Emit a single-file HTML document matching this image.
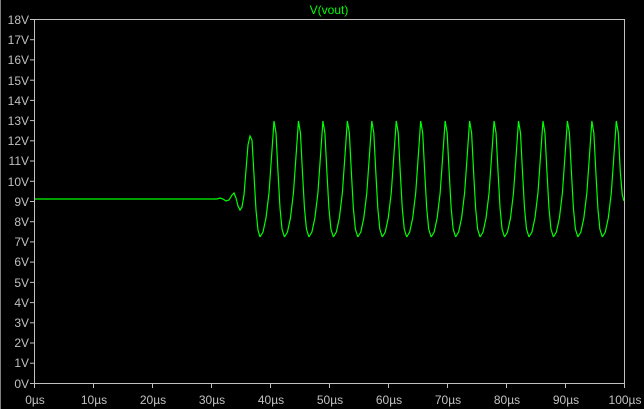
<!DOCTYPE html>
<html><head><style>
body{margin:0;background:#000;width:644px;height:409px;overflow:hidden}
svg{display:block}
text{font-family:"Liberation Sans",sans-serif;font-size:12px;fill:#c0c0c0}
</style></head><body>
<svg width="644" height="409" xmlns="http://www.w3.org/2000/svg">
<rect x="0" y="0" width="1" height="409" fill="#808080"/>
<rect x="34.5" y="19.5" width="590" height="364" fill="none" stroke="#c0c0c0" stroke-width="1"/>
<text x="329" y="14" text-anchor="middle" style="fill:#00ff00">V(vout)</text>
<g id="yl" stroke="#c0c0c0">
<line x1="30" x2="34" y1="19.5" y2="19.5"/><line x1="30" x2="34" y1="39.7" y2="39.7"/><line x1="30" x2="34" y1="59.9" y2="59.9"/><line x1="30" x2="34" y1="80.2" y2="80.2"/><line x1="30" x2="34" y1="100.4" y2="100.4"/><line x1="30" x2="34" y1="120.6" y2="120.6"/><line x1="30" x2="34" y1="140.8" y2="140.8"/><line x1="30" x2="34" y1="161" y2="161"/><line x1="30" x2="34" y1="181.3" y2="181.3"/><line x1="30" x2="34" y1="201.5" y2="201.5"/><line x1="30" x2="34" y1="221.7" y2="221.7"/><line x1="30" x2="34" y1="241.9" y2="241.9"/><line x1="30" x2="34" y1="262.1" y2="262.1"/><line x1="30" x2="34" y1="282.4" y2="282.4"/><line x1="30" x2="34" y1="302.6" y2="302.6"/><line x1="30" x2="34" y1="322.8" y2="322.8"/><line x1="30" x2="34" y1="343" y2="343"/><line x1="30" x2="34" y1="363.2" y2="363.2"/><line x1="30" x2="34" y1="383.5" y2="383.5"/>
</g>
<g text-anchor="end">
<text x="29" y="24">18V</text><text x="29" y="44">17V</text><text x="29" y="64">16V</text><text x="29" y="85">15V</text><text x="29" y="105">14V</text><text x="29" y="125">13V</text><text x="29" y="145">12V</text><text x="29" y="165">11V</text><text x="29" y="186">10V</text><text x="29" y="206">9V</text><text x="29" y="226">8V</text><text x="29" y="246">7V</text><text x="29" y="266">6V</text><text x="29" y="287">5V</text><text x="29" y="307">4V</text><text x="29" y="327">3V</text><text x="29" y="347">2V</text><text x="29" y="367">1V</text><text x="29" y="388">0V</text>
</g>
<g stroke="#c0c0c0">
<line x1="34.5" x2="34.5" y1="383" y2="388"/><line x1="93.5" x2="93.5" y1="383" y2="388"/><line x1="152.5" x2="152.5" y1="383" y2="388"/><line x1="211.5" x2="211.5" y1="383" y2="388"/><line x1="270.5" x2="270.5" y1="383" y2="388"/><line x1="329.5" x2="329.5" y1="383" y2="388"/><line x1="388.5" x2="388.5" y1="383" y2="388"/><line x1="447.5" x2="447.5" y1="383" y2="388"/><line x1="506.5" x2="506.5" y1="383" y2="388"/><line x1="565.5" x2="565.5" y1="383" y2="388"/><line x1="624.5" x2="624.5" y1="383" y2="388"/>
</g>
<g text-anchor="middle">
<text x="35" y="404">0µs</text><text x="94" y="404">10µs</text><text x="153" y="404">20µs</text><text x="212" y="404">30µs</text><text x="271" y="404">40µs</text><text x="330" y="404">50µs</text><text x="389" y="404">60µs</text><text x="448" y="404">70µs</text><text x="507" y="404">80µs</text><text x="566" y="404">90µs</text><text x="625" y="404">100µs</text>
</g>
<defs>
<polyline id="cyc" fill="none" stroke="#00ff00" stroke-width="1.2" points="0,237 3,232 6,218 9,193 12,150 14,121 16,133 18,172 20,208 22,229 24.45,237"/>
</defs>
<polyline fill="none" stroke="#00ff00" stroke-width="1.2" points="35,199 217,199 220,198 223,199 226,201 229,200 232,195 234,193 236,198 238,206 240,210 242,207 244,195 246,170 248,145 250,136 252,140 254,175 256,210 258,230 260,237"/>
<use href="#cyc" x="260"/><use href="#cyc" x="284.45"/><use href="#cyc" x="308.9"/><use href="#cyc" x="333.35"/><use href="#cyc" x="357.8"/><use href="#cyc" x="382.25"/><use href="#cyc" x="406.7"/><use href="#cyc" x="431.15"/><use href="#cyc" x="455.6"/><use href="#cyc" x="480.05"/><use href="#cyc" x="504.5"/><use href="#cyc" x="528.95"/><use href="#cyc" x="553.4"/><use href="#cyc" x="577.85"/>
<polyline fill="none" stroke="#00ff00" stroke-width="1.2" points="602.3,237 605.3,232 608.3,218 611.3,193 614.3,150 616.3,121 618.3,133 620.3,172 622.3,195 624,201"/>
</svg>
</body></html>
